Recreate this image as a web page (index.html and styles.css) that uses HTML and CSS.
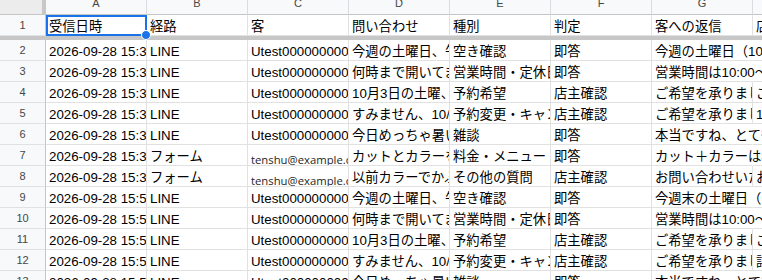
FILE: index.html
```html
<!DOCTYPE html>
<html lang="ja">
<head>
<meta charset="utf-8">
<title>問い合わせ一覧</title>
<link rel="stylesheet" href="styles.css">
</head>
<body>
<div class="sheet">
  <div class="corner"></div>
  <div class="ch">A</div><div class="ch">B</div><div class="ch">C</div><div class="ch">D</div><div class="ch">E</div><div class="ch">F</div><div class="ch">G</div><div class="ch">H</div>

  <div class="rh">1</div>
  <div class="c sel">受信日時</div><div class="c">経路</div><div class="c">客</div><div class="c">問い合わせ</div><div class="c">種別</div><div class="c">判定</div><div class="c">客への返信</div><div class="c">店主メモ</div>

  <div class="freeze"></div>

  <div class="rh">2</div>
  <div class="c">2026-09-28 15:31:02</div><div class="c">LINE</div><div class="c">Utest00000000000000000000000001</div><div class="c">今週の土曜日、午後から空いてますか？</div><div class="c">空き確認</div><div class="c">即答</div><div class="c spill">今週の土曜日（10/4）は14:00以降でしたら空きがございます。</div><div class="c"></div>

  <div class="rh">3</div>
  <div class="c">2026-09-28 15:31:45</div><div class="c">LINE</div><div class="c">Utest00000000000000000000000002</div><div class="c">何時まで開いてますか？</div><div class="c">営業時間・定休日</div><div class="c">即答</div><div class="c spill">営業時間は10:00〜19:00、定休日は毎週火曜日です。</div><div class="c"></div>

  <div class="rh">4</div>
  <div class="c">2026-09-28 15:32:10</div><div class="c">LINE</div><div class="c">Utest00000000000000000000000003</div><div class="c">10月3日の土曜、カットの予約をしたいです</div><div class="c">予約希望</div><div class="c">店主確認</div><div class="c">ご希望を承りました。店主より確認のうえご連絡いたします。</div><div class="c">ご予約希望：10月3日（土）</div>

  <div class="rh">5</div>
  <div class="c">2026-09-28 15:32:48</div><div class="c">LINE</div><div class="c">Utest00000000000000000000000004</div><div class="c">すみません、10/5の予約をキャンセルしたいです</div><div class="c">予約変更・キャンセル</div><div class="c">店主確認</div><div class="c">ご希望を承りました。店主より確認のうえご連絡いたします。</div><div class="c">10/5 予約キャンセル希望</div>

  <div class="rh">6</div>
  <div class="c">2026-09-28 15:33:20</div><div class="c">LINE</div><div class="c">Utest00000000000000000000000005</div><div class="c">今日めっちゃ暑いですね</div><div class="c">雑談</div><div class="c">即答</div><div class="c spill">本当ですね、とても暑い日が続きますね。</div><div class="c"></div>

  <div class="rh">7</div>
  <div class="c">2026-09-28 15:34:05</div><div class="c">フォーム</div><div class="c mail">tenshu@example.com</div><div class="c">カットとカラーを一緒にするといくらですか？</div><div class="c">料金・メニュー</div><div class="c">即答</div><div class="c spill">カット＋カラーは8,800円（税込）からです。</div><div class="c"></div>

  <div class="rh">8</div>
  <div class="c">2026-09-28 15:34:40</div><div class="c">フォーム</div><div class="c mail">tenshu@example.com</div><div class="c">以前カラーでかぶれたことがあるのですが</div><div class="c">その他の質問</div><div class="c">店主確認</div><div class="c">お問い合わせいただきありがとうございます。</div><div class="c">お客様の肌トラブル相談</div>

  <div class="rh">9</div>
  <div class="c">2026-09-28 15:51:12</div><div class="c">LINE</div><div class="c">Utest00000000000000000000000001</div><div class="c">今週の土曜日、午後から空いてますか？</div><div class="c">空き確認</div><div class="c">即答</div><div class="c spill">今週末の土曜日（10/4）は14:00以降が空いております。</div><div class="c"></div>

  <div class="rh">10</div>
  <div class="c">2026-09-28 15:51:50</div><div class="c">LINE</div><div class="c">Utest00000000000000000000000002</div><div class="c">何時まで開いてますか？</div><div class="c">営業時間・定休日</div><div class="c">即答</div><div class="c spill">営業時間は10:00〜19:00です。</div><div class="c"></div>

  <div class="rh">11</div>
  <div class="c">2026-09-28 15:52:22</div><div class="c">LINE</div><div class="c">Utest00000000000000000000000003</div><div class="c">10月3日の土曜、カットの予約をしたいです</div><div class="c">予約希望</div><div class="c">店主確認</div><div class="c">ご希望を承りました。店主より確認のうえご連絡いたします。</div><div class="c">ご予約希望：10月3日（土）</div>

  <div class="rh">12</div>
  <div class="c">2026-09-28 15:52:58</div><div class="c">LINE</div><div class="c">Utest00000000000000000000000004</div><div class="c">すみません、10/5の予約をキャンセルしたいです</div><div class="c">予約変更・キャンセル</div><div class="c">店主確認</div><div class="c">ご希望を承りました。店主より確認のうえご連絡いたします。</div><div class="c">詳細を確認してから返信</div>

  <div class="rh">13</div>
  <div class="c">2026-09-28 15:53:30</div><div class="c">LINE</div><div class="c">Utest00000000000000000000000005</div><div class="c">今日めっちゃ暑いですね</div><div class="c">雑談</div><div class="c">即答</div><div class="c spill">本当ですね、とても暑いですね。</div><div class="c"></div>
</div>
</body>
</html>
```
FILE: styles.css
```css
html, body {
  margin: 0;
  padding: 0;
  background: #ffffff;
}
body {
  width: 762px;
  height: 280px;
  overflow: hidden;
  font-family: "Liberation Sans", Arial, "Noto Sans CJK JP", sans-serif;
}
.sheet {
  display: grid;
  grid-template-columns: 46px repeat(8, 101px);
  grid-template-rows: 21px 21px 4px;
  grid-auto-rows: 21px;
  margin-top: -6px;
  width: max-content;
}
.corner {
  box-sizing: border-box;
  background: #ececec;
  border-right: 4px solid #c7c7c7;
  border-bottom: 1px solid #c4c7c5;
}
.ch {
  box-sizing: border-box;
  background: #f8f9fa;
  border-right: 1px solid #dadce0;
  border-bottom: 1px solid #c4c7c5;
  text-align: center;
  font-size: 11px;
  line-height: 18px;
  color: #444746;
}
.rh {
  box-sizing: border-box;
  background: #f8f9fa;
  border-right: 1px solid #c4c7c5;
  border-bottom: 1px solid #e1e1e1;
  text-align: center;
  font-size: 11px;
  line-height: 20px;
  color: #444746;
}
.c {
  box-sizing: border-box;
  border-right: 1px solid #e1e1e1;
  border-bottom: 1px solid #e1e1e1;
  padding: 4px 3px 0;
  font-size: 13.3px;
  line-height: 16px;
  white-space: nowrap;
  overflow: hidden;
  color: #000000;
}
.spill {
  overflow: visible;
  border-right-color: transparent;
}
.mail {
  font-family: "Open Sans", "Noto Sans", sans-serif;
  font-size: 11.3px;
  line-height: 15px;
  padding-top: 7px;
  color: #1f1f1f;
}
.freeze {
  grid-column: 1 / -1;
  background: #c7c7c7;
}
.sel {
  position: relative;
  overflow: visible;
}
.sel::after {
  content: "";
  position: absolute;
  left: 0;
  top: 0;
  right: -1px;
  bottom: -1px;
  border: 2px solid #1a73e8;
}
.sel::before {
  content: "";
  position: absolute;
  right: -5px;
  bottom: -5px;
  width: 10px;
  height: 10px;
  box-sizing: border-box;
  border: 1px solid #ffffff;
  border-radius: 50%;
  background: #1a73e8;
  z-index: 2;
}
```
